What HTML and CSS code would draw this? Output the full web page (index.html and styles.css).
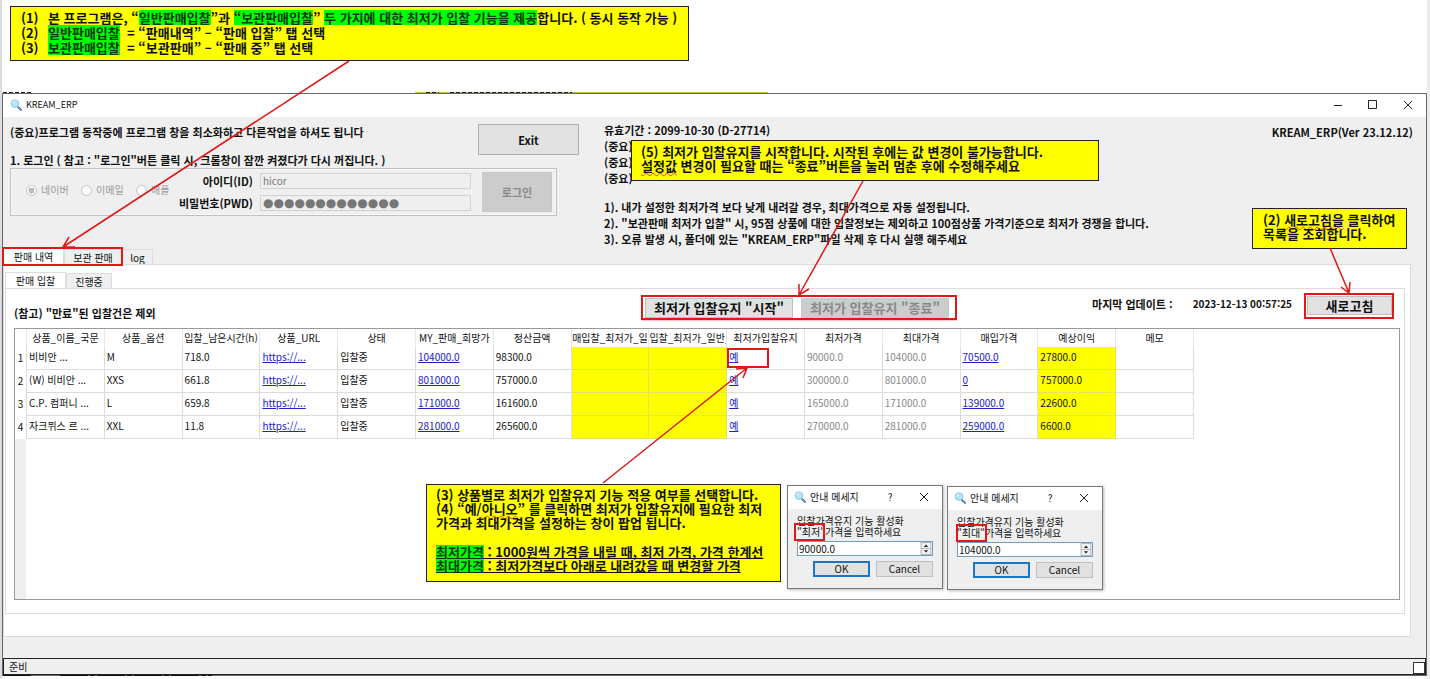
FILE: index.html
```html
<!DOCTYPE html>
<html lang="ko">
<head>
<meta charset="utf-8">
<title>KREAM_ERP</title>
<link rel="stylesheet" href="styles.css">
</head>
<body>
<main class="slide">
  <section class="callout callout-intro">
    <div class="step"><span class="step-no">(1)</span><p>본 프로그램은, “<mark>일반판매입찰</mark>”과 <mark>“보관판매입찰</mark>” <mark>두 가지에 대한 최저가 입찰 기능을 제공</mark>합니다. ( 동시 동작 가능 )</p></div>
    <div class="step"><span class="step-no">(2)</span><p><mark>일반판매입찰</mark> &nbsp;= “판매내역” – “판매 입찰” 탭 선택</p></div>
    <div class="step"><span class="step-no">(3)</span><p><mark>보관판매입찰</mark> &nbsp;= “보관판매” – “판매 중” 탭 선택</p></div>
  </section>

  <section class="window">
    <header class="titlebar">
      <svg class="lens" viewBox="0 0 12 12"><path d="M7.5 7.5 11 11" stroke="#4b83b5" stroke-width="1.8" stroke-linecap="round"/><circle cx="5" cy="4.6" r="3.8" fill="#b5e3f7" stroke="#8ccbe8"/><path d="M3 4.3A2 2 0 0 1 5 2.6" stroke="#fff" fill="none"/></svg>
      <h1>KREAM_ERP</h1>
      <div class="window-buttons">
        <button type="button" aria-label="최소화"><svg viewBox="0 0 12 12"><path d="M2 6.5h8"/></svg></button>
        <button type="button" aria-label="최대화"><svg viewBox="0 0 12 12"><path d="M1.500 1.500h8v8h-8z"/></svg></button>
        <button type="button" aria-label="닫기"><svg viewBox="0 0 12 12"><path d="M2 2l8 8M10 2l-8 8"/></svg></button>
      </div>
    </header>

    <div class="top">
      <div class="account">
        <p class="notice">(중요)프로그램 동작중에 프로그램 창을 최소화하고 다른작업을 하셔도 됩니다</p>
        <button type="button" class="btn btn-exit">Exit</button>
        <p class="login-title">1. 로그인 ( 참고 : "로그인"버튼 클릭 시, 크롬창이 잠깐 켜졌다가 다시 꺼집니다. )</p>
        <form class="login">
          <div class="radios">
            <label><input type="radio" name="kind" checked disabled>네이버</label>
            <label><input type="radio" name="kind" disabled>이메일</label>
            <label><input type="radio" name="kind" disabled>애플</label>
          </div>
          <div class="fields">
            <label for="uid">아이디(ID)</label><input id="uid" type="text" value="hicor" disabled>
            <label for="pwd">비밀번호(PWD)</label><input id="pwd" class="pwd" type="text" value="●●●●●●●●●●●●●" disabled>
          </div>
          <button type="button" class="btn btn-login" disabled>로그인</button>
        </form>
      </div>
      <div class="guide">
        <div>
          <p>유효기간 : 2099-10-30 (D-27714)</p>
          <p>(중요)</p>
          <p>(중요)</p>
          <p>(중요)</p>
        </div>
        <div>
          <p>1). 내가 설정한 최저가격 보다 낮게 내려갈 경우, 최대가격으로 자동 설정됩니다.</p>
          <p>2). "보관판매 최저가 입찰" 시, 95점 상품에 대한 입찰정보는 제외하고 100점상품 가격기준으로 최저가 경쟁을 합니다.</p>
          <p>3). 오류 발생 시, 폴더에 있는 "KREAM_ERP"파일 삭제 후 다시 실행 해주세요</p>
        </div>
      </div>
      <p class="version">KREAM_ERP(Ver 23.12.12)</p>
    </div>

    <nav class="tabs main-tabs">
      <button type="button" class="tab active">판매 내역</button>
      <button type="button" class="tab">보관 판매</button>
      <button type="button" class="tab tab-log">log</button>
    </nav>
    <div class="pane outer">
      <nav class="tabs">
        <button type="button" class="tab active">판매 입찰</button>
        <button type="button" class="tab tab-short">진행중</button>
      </nav>
      <div class="pane inner">
        <div class="toolbar">
          <p class="hint">(참고) "만료"된 입찰건은 제외</p>
          <div class="actions">
            <button type="button" class="btn btn-action">최저가 입찰유지 "시작"</button>
            <button type="button" class="btn btn-action" disabled>최저가 입찰유지 "종료"</button>
          </div>
          <div class="update">
            <span>마지막 업데이트 :</span>
            <time>2023-12-13 00:57:25</time>
            <button type="button" class="btn btn-refresh">새로고침</button>
          </div>
        </div>
        <div class="grid">
          <table>
            <thead>
              <tr><th class="no"></th><th>상품_이름_국문</th><th>상품_옵션</th><th>입찰_남은시간(h)</th><th>상품_URL</th><th>상태</th><th>MY_판매_희망가</th><th>정산금액</th><th>매입찰_최저가_일</th><th>입찰_최저가_일반_</th><th>최저가입찰유지</th><th>최저가격</th><th>최대가격</th><th>매입가격</th><th>예상이익</th><th>메모</th></tr>
            </thead>
            <tbody>
              <tr><td class="no">1</td><td>비비안 ...</td><td>M</td><td>718.0</td><td><a href="#">https://...</a></td><td>입찰중</td><td><a href="#">104000.0</a></td><td>98300.0</td><td class="hl"></td><td class="hl"></td><td><a href="#">예</a></td><td class="dim">90000.0</td><td class="dim">104000.0</td><td><a href="#">70500.0</a></td><td class="hl">27800.0</td><td></td></tr>
              <tr><td class="no">2</td><td>(W) 비비안 ...</td><td>XXS</td><td>661.8</td><td><a href="#">https://...</a></td><td>입찰중</td><td><a href="#">801000.0</a></td><td>757000.0</td><td class="hl"></td><td class="hl"></td><td><a href="#">예</a></td><td class="dim">300000.0</td><td class="dim">801000.0</td><td><a href="#">0</a></td><td class="hl">757000.0</td><td></td></tr>
              <tr><td class="no">3</td><td>C.P. 컴퍼니 ...</td><td>L</td><td>659.8</td><td><a href="#">https://...</a></td><td>입찰중</td><td><a href="#">171000.0</a></td><td>161600.0</td><td class="hl"></td><td class="hl"></td><td><a href="#">예</a></td><td class="dim">165000.0</td><td class="dim">171000.0</td><td><a href="#">139000.0</a></td><td class="hl">22600.0</td><td></td></tr>
              <tr><td class="no">4</td><td>자크뮈스 르 ...</td><td>XXL</td><td>11.8</td><td><a href="#">https://...</a></td><td>입찰중</td><td><a href="#">281000.0</a></td><td>265600.0</td><td class="hl"></td><td class="hl"></td><td><a href="#">예</a></td><td class="dim">270000.0</td><td class="dim">281000.0</td><td><a href="#">259000.0</a></td><td class="hl">6600.0</td><td></td></tr>
            </tbody>
          </table>
        </div>
      </div>
    </div>
    <footer class="status"><span>준비</span><i class="grip"></i></footer>
  </section>

  <section class="dialog dialog-min">
    <header>
      <svg class="lens" viewBox="0 0 12 12"><path d="M7.5 7.5 11 11" stroke="#4b83b5" stroke-width="1.8" stroke-linecap="round"/><circle cx="5" cy="4.6" r="3.8" fill="#b5e3f7" stroke="#8ccbe8"/><path d="M3 4.3A2 2 0 0 1 5 2.6" stroke="#fff" fill="none"/></svg>
      <h2>안내 메세지</h2>
      <button type="button" class="plain">?</button>
      <button type="button" class="plain" aria-label="닫기"><svg viewBox="0 0 12 12"><path d="M2 2l8 8M10 2l-8 8"/></svg></button>
    </header>
    <label for="min-price">입찰가격유지 기능 활성화<br>"최저"가격을 입력하세요</label>
    <div class="spin">
      <input id="min-price" type="text" value="90000.0">
      <svg viewBox="0 0 10 12"><path d="M.5.5h9v11h-9zM.5 6h9" fill="#f2f2f2" stroke="#b5b5b5"/><path d="M3 4.5h4L5 2.2zM3 7.5h4L5 9.8z" fill="#222"/></svg>
    </div>
    <div class="dialog-actions">
      <button type="button" class="btn btn-ok">OK</button>
      <button type="button" class="btn btn-cancel">Cancel</button>
    </div>
  </section>

  <section class="dialog dialog-max">
    <header>
      <svg class="lens" viewBox="0 0 12 12"><path d="M7.5 7.5 11 11" stroke="#4b83b5" stroke-width="1.8" stroke-linecap="round"/><circle cx="5" cy="4.6" r="3.8" fill="#b5e3f7" stroke="#8ccbe8"/><path d="M3 4.3A2 2 0 0 1 5 2.6" stroke="#fff" fill="none"/></svg>
      <h2>안내 메세지</h2>
      <button type="button" class="plain">?</button>
      <button type="button" class="plain" aria-label="닫기"><svg viewBox="0 0 12 12"><path d="M2 2l8 8M10 2l-8 8"/></svg></button>
    </header>
    <label for="max-price">입찰가격유지 기능 활성화<br>"최대"가격을 입력하세요</label>
    <div class="spin">
      <input id="max-price" type="text" value="104000.0">
      <svg viewBox="0 0 10 12"><path d="M.5.5h9v11h-9zM.5 6h9" fill="#f2f2f2" stroke="#b5b5b5"/><path d="M3 4.5h4L5 2.2zM3 7.5h4L5 9.8z" fill="#222"/></svg>
    </div>
    <div class="dialog-actions">
      <button type="button" class="btn btn-ok">OK</button>
      <button type="button" class="btn btn-cancel">Cancel</button>
    </div>
  </section>

  <section class="callout note note-start">
    <p>(5) 최저가 입찰유지를 시작합니다. 시작된 후에는 값 변경이 불가능합니다.</p>
    <p><span class="wavy">설정값</span> 변경이 필요할 때는 “종료”버튼을 눌러 멈춘 후에 수정해주세요</p>
  </section>
  <section class="callout note note-refresh">
    <p>(2) <span class="wavy">새로고침을</span> 클릭하여</p>
    <p>목록을 조회합니다.</p>
  </section>
  <section class="callout note note-price">
    <p>(3) 상품별로 최저가 입찰유지 기능 적용 여부를 선택합니다.</p>
    <p>(4) “예/<span class="wavy">아니오</span>” 를 클릭하면 최저가 입찰유지에 필요한 최저</p>
    <p>가격과 최대가격을 설정하는 창이 팝업 됩니다.</p>
    <p class="term"><mark>최저가격</mark> : 1000원씩 가격을 내릴 때, 최저 가격, 가격 한계선</p>
    <p class="term"><mark>최대가격</mark> : 최저가격보다 아래로 내려갔을 때 변경할 가격</p>
  </section>

  <svg class="marks" width="1430" height="679" viewBox="0 0 1430 679" aria-hidden="true">
    <path d="M415 92.500H768" stroke="#c8c04a"/>
    <path d="M426 92.500h13M450 92.500h122M3 92.500h28" stroke="#222" stroke-dasharray="4 2"/>
    <path d="M3 675.500h28M60 675.500h152" stroke="#111" stroke-dasharray="28 2 5 2"/>
    <path d="M642 320.500h315" stroke="#ffc4c8"/>
    <g fill="none" stroke="#e01818" stroke-width="2">
      <path d="M3 248h119v17H3zM642 296h314v23H642zM1305 294h88v24h-88zM728 349h40v18h-40zM795 524h29v16h-29zM957 525h29v16h-29z"/>
    </g>
    <g fill="none" stroke="#e01818" stroke-width="1.5">
      <path d="M349 61 63 247M69 237 63 247H75"/>
      <path d="M863 181 799 295M799 284V295L809 289"/>
      <path d="M1330 248 1349 293M1341 287 1349 293 1350 282"/>
      <path d="M603 483 747 368M736 369 747 368 743 378"/>
    </g>
  </svg>
</main>
</body>
</html>
```
FILE: styles.css
```css
* { box-sizing: border-box; }
body {
  margin: 0;
  background: #fff;
  color: #111;
  font: 11px/16px "Noto Sans CJK KR", sans-serif;
}
p, h1, h2 { margin: 0; }
button, input { font: inherit; color: inherit; margin: 0; }
.slide {
  position: relative;
  min-height: 100vh;
  display: flex;
  flex-direction: column;
  padding: 6px 3px 3px 2px;
  background: linear-gradient(90deg, #dcdce2 0 2px, transparent 2px calc(100% - 3px), #ececec calc(100% - 3px));
  overflow: hidden;
}

/* Yellow annotations */
.callout {
  background: #ff0;
  border: 1px solid #222;
  font-size: 13px;
  line-height: 14px;
  font-weight: 700;
  white-space: nowrap;
}
.callout mark { display: inline-block; background: #0f0; color: #063806; }
.callout-intro { width: 679px; height: 55px; margin: 0 0 32px 8px; padding: 3px 10px; line-height: 15px; }
.step { display: flex; }
.step-no { width: 27px; }
.note { position: absolute; padding: 4px 9px; }
.note-start { left: 631px; top: 140px; width: 468px; height: 41px; }
.note-refresh { left: 1252px; top: 208px; width: 155px; height: 41px; padding-left: 10px; }
.note-price { left: 426px; top: 484px; width: 355px; height: 98px; padding-top: 3px; }
.wavy { text-decoration: underline wavy #e04020 1px; text-underline-offset: 1px; text-decoration-skip-ink: none; }
.term { text-decoration: underline; text-decoration-skip-ink: none; }
.term mark { text-decoration: underline; }
p:not(.term) + .term { margin-top: 15px; }

/* Application window */
.window {
  flex: 1;
  display: flex;
  flex-direction: column;
  background: #efefef;
  border: 1px solid #666;
}
.titlebar { display: flex; align-items: center; gap: 4px; height: 23px; padding: 0 12px 2px 7px; background: #fff; }
.titlebar h1 { font-size: 9px; font-weight: 400; }
.lens { width: 12px; height: 12px; fill: none; }
.window-buttons { display: flex; gap: 23px; margin-left: auto; }
.window-buttons button, .plain { width: 12px; padding: 0; border: 0; background: none; line-height: 12px; }
.window-buttons svg, .plain svg { display: block; width: 12px; height: 12px; fill: none; stroke: #222; }

.top { display: flex; height: 131px; padding: 7px 13px 0 7px; font-weight: 700; white-space: nowrap; }
.account {
  width: 594px;
  display: grid;
  grid-template-columns: 468px 101px;
  grid-template-rows: 16px 16px 48px;
  row-gap: 12px;
}
.btn { padding: 0; background: #e1e1e1; border: 1px solid #c0c0c0; font-weight: 700; }
.btn:disabled { background: #ccc; border-color: #c8c8c8; color: #888; }
.btn-exit { grid-column: 2; grid-row: 1 / 3; height: 31px; border-color: #b0b0b0; }
.login {
  grid-column: 1 / 3;
  width: 547px;
  margin-top: -12px;
  height: 48px;
  display: flex;
  padding: 3px 4px 3px 15px;
  border: 1px solid #c0c0c0;
  box-shadow: inset 0 0 0 1px #f8f8f8;
}
.radios { display: flex; align-items: center; width: 148px; padding-bottom: 4px; color: #999; font-weight: 400; font-size: 10px; }
.radios label { display: flex; align-items: center; gap: 4px; width: 55px; flex: none; }
.radios input {
  appearance: none;
  width: 11px;
  height: 11px;
  border: 1px solid #c4c4c4;
  border-radius: 50%;
  background: #fafafa;
}
.radios input:checked { background: radial-gradient(#bbb 0 3px, #fafafa 3px); }
.fields {
  display: grid;
  grid-template-columns: 1fr 211px;
  grid-auto-rows: 16px;
  align-content: center;
  column-gap: 7px;
  row-gap: 6px;
  flex: 1;
}
.fields label { text-align: right; }
.fields input {
  min-width: 0;
  width: 100%;
  height: 16px;
  padding: 0 2px;
  border: 1px solid #d2d2d2;
  background: #efefef;
  color: #777;
  font-size: 10px;
  font-weight: 400;
}
.fields .pwd { font-family: "DejaVu Sans", sans-serif; font-size: 12px; }
.btn-login { width: 70px; margin-left: 11px; }
.guide { display: flex; flex-direction: column; gap: 13px; margin-top: -2px; }
.version { margin-left: auto; }

.tabs { display: flex; align-items: flex-end; height: 16px; }
.tab {
  width: 58px;
  height: 15px;
  padding: 0;
  border: 1px solid #ddd;
  border-bottom: 0;
  background: #efefef;
  font-size: 10px;
  line-height: 13px;
}
.tab.active { width: 61px; height: 16px; background: #fff; }
.tab-log { width: 31px; }
.tab-short { width: 46px; }
.pane { border: 1px solid #dcdcdc; background: #fff; flex: 1; display: flex; flex-direction: column; }
.outer { margin: 0 15px 21px 0; padding: 7px 5px 22px 1px; }
.inner { padding: 6px 4px 13px 8px; }
.toolbar { display: flex; height: 33px; font-weight: 700; white-space: nowrap; }
.hint { width: 631px; padding-top: 10px; }
.actions { display: flex; align-items: flex-start; gap: 8px; padding-top: 3px; }
.btn-action { width: 148px; height: 20px; font-size: 13px; line-height: 18px; }
.update { display: flex; align-items: flex-start; gap: 20px; margin-left: auto; padding: 1px 8px 0 0; }
.update time { font-size: 10px; }
.btn-refresh { width: 85px; height: 19px; margin-left: -5px; font-size: 13px; line-height: 17px; }

/* Item table */
.grid {
  flex: 1;
  border: 1px solid #999;
  background: linear-gradient(90deg, #efefef 11px, #fff 11px);
}
table {
  width: 1179px;
  table-layout: fixed;
  border-collapse: separate;
  border-spacing: 0;
  font-size: 10px;
  line-height: 14px;
  background: #fff;
}
th, td {
  height: 23px;
  padding: 0 2px 2px;
  overflow: hidden;
  white-space: nowrap;
  text-align: left;
  border-right: 1px solid #dcdcdc;
  border-bottom: 1px solid #dcdcdc;
}
th { height: 18px; padding: 0 0 1px; border-bottom: 0; border-color: #e8e8e8; font-weight: 400; text-align: center; }
.no { width: 12px; padding: 0 0 2px; text-align: center; border-bottom: 0; }
.hl { background: #ff0; border-color: #e4e45c; }
.dim { color: #888; }
a { color: #2020c8; }

.status {
  display: flex;
  align-items: center;
  justify-content: space-between;
  height: 17px;
  padding: 0 0 0 5px;
  border: 1px solid #222;
  font-size: 10px;
}
.grip { width: 12px; height: 12px; border: 1px solid #333; background: #fff; align-self: flex-end; }

/* Price dialogs */
.dialog {
  position: absolute;
  width: 156px;
  height: 104px;
  padding: 0 9px;
  border: 1px solid #777;
  background: #efefef;
  box-shadow: 1px 1px 3px #bbb;
  font-size: 10px;
  line-height: 11px;
}
.dialog-min { left: 787px; top: 485px; }
.dialog-max { left: 947px; top: 486px; }
.dialog header { display: flex; align-items: center; height: 23px; margin: 0 -9px 6px; padding: 0 12px 2px 6px; background: #fff; }
.dialog h2 { flex: 1; margin-left: 4px; font-size: 10px; font-weight: 400; }
.plain + .plain { margin-left: 22px; }
.dialog label { display: block; white-space: nowrap; }
.spin { display: flex; height: 15px; margin-top: 4px; border: 1px solid #6f9fc0; background: #fff; }
.spin input { flex: 1; min-width: 0; padding: 0 1px; border: 0; background: none; }
.spin svg { width: 12px; height: 13px; }
.dialog-actions { display: flex; justify-content: flex-end; gap: 6px; margin-top: 5px; }
.dialog .btn { width: 57px; height: 16px; font-weight: 400; line-height: 12px; }
.dialog .btn-ok { border: 2px solid #1878c8; }

.marks { position: absolute; left: 0; top: 0; pointer-events: none; }
```
